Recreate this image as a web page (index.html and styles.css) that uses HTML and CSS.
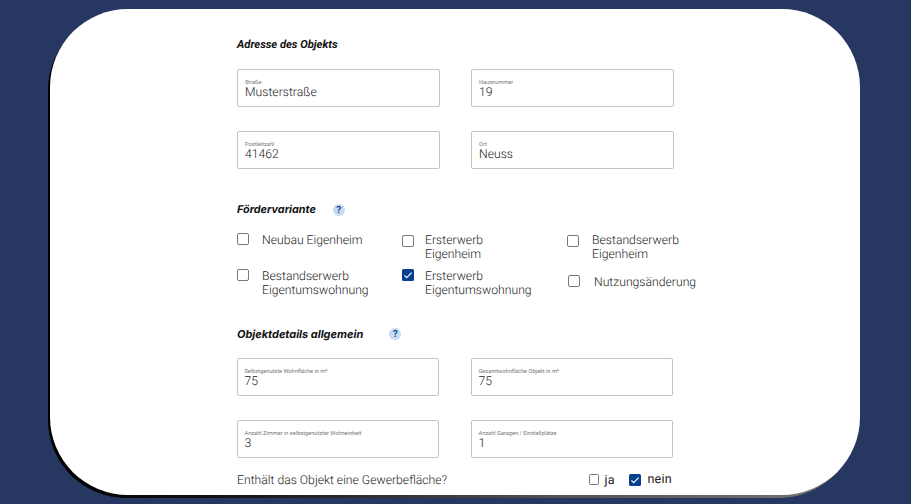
FILE: index.html
```html
<!DOCTYPE html>
<html lang="de">
<head>
<meta charset="utf-8">
<title>Objektdaten</title>
<link rel="stylesheet" href="styles.css">
</head>
<body>
<main class="card">
  <form class="form">
    <h2 class="title title-address">Adresse des Objekts</h2>
    <section class="fields fields-address">
      <div class="field"><label>Straße</label><span class="value">Musterstraße</span></div>
      <div class="field"><label>Hausnummer</label><span class="value">19</span></div>
      <div class="field"><label>Postleitzahl</label><span class="value">41462</span></div>
      <div class="field"><label>Ort</label><span class="value">Neuss</span></div>
    </section>

    <div class="heading heading-variant">
      <h2 class="title title-variant">Fördervariante</h2>
      <span class="help">?</span>
    </div>
    <section class="options">
      <div class="option"><i class="box"></i><span>Neubau Eigenheim</span></div>
      <div class="option middle lower"><i class="box"></i><span>Ersterwerb<br>Eigenheim</span></div>
      <div class="option last lower"><i class="box"></i><span>Bestandserwerb<br>Eigenheim</span></div>
      <div class="option"><i class="box"></i><span>Bestandserwerb<br>Eigentumswohnung</span></div>
      <div class="option middle"><i class="box checked"><svg viewBox="0 0 12 12"><path d="M2.4 6.3 4.7 8.6 9.6 3.6"/></svg></i><span>Ersterwerb<br>Eigentumswohnung</span></div>
      <div class="option last change"><i class="box"></i><span>Nutzungsänderung</span></div>
    </section>

    <div class="heading heading-details">
      <h2 class="title title-details">Objektdetails allgemein</h2>
      <span class="help">?</span>
    </div>
    <section class="fields fields-details">
      <div class="field"><label>Selbstgenutzte Wohnfläche in m²</label><span class="value">75</span></div>
      <div class="field"><label>Gesamtwohnfläche Objekt in m²</label><span class="value">75</span></div>
      <div class="field"><label>Anzahl Zimmer in selbstgenutzter Wohneinheit</label><span class="value">3</span></div>
      <div class="field"><label>Anzahl Garagen / Einstellplätze</label><span class="value">1</span></div>
    </section>

    <div class="question">
      <span class="question-text">Enthält das Objekt eine Gewerbefläche?</span>
      <i class="box small"></i><span class="answer yes">ja</span>
      <i class="box checked"><svg viewBox="0 0 12 12"><path d="M2.4 6.3 4.7 8.6 9.6 3.6"/></svg></i><span class="answer no">nein</span>
    </div>
  </form>
</main>
</body>
</html>
```
FILE: styles.css
```css
* { box-sizing: border-box; }

body {
  margin: 0;
  width: 911px;
  height: 504px;
  overflow: hidden;
  background: #263761;
  font-family: Roboto, "Liberation Sans", sans-serif;
  font-weight: 300;
  color: #222;
  text-rendering: geometricPrecision;
}

.card {
  position: relative;
  z-index: 0;
  width: 810px;
  height: 486px;
  margin: 9px 0 0 50px;
  border-radius: 78px;
}

/* offset shadow that fades from black to grey */
.card::before {
  content: "";
  position: absolute;
  z-index: -2;
  inset: 3px 3px -2.5px -2.5px;
  border-radius: 78px;
  background: linear-gradient(90deg, #000 0, #111 20%, #555 65%, #777 100%);
}

.card::after {
  content: "";
  position: absolute;
  z-index: -1;
  inset: 0;
  border-radius: 78px;
  background: #fff;
}

.form { padding: 28px 0 0 187px; width: 680px; }

.title {
  margin: 0;
  line-height: 16px;
  font-weight: 700;
  font-style: italic;
  color: #111;
  white-space: nowrap;
}
.title-address { font-size: 11.2px; }
.title-variant { font-family: Inter, Roboto, sans-serif; font-size: 10.8px; }
.title-details { font-family: Inter, Roboto, sans-serif; font-size: 10.95px; }

.fields {
  display: grid;
  grid-template-columns: 202.5px 202.5px;
  grid-auto-rows: 38px;
  gap: 24px 31.5px;
}
.fields-address { margin-top: 16px; }
.fields-details { margin: 16px 0 0 -0.5px; }

.field {
  display: flex;
  flex-direction: column;
  padding: 10px 0 0 7px;
  border: 1px solid #c4c4c4;
  border-radius: 2px;
}
.field label {
  font-size: 5.65px;
  line-height: 6px;
  font-weight: 400;
  color: #777;
  white-space: nowrap;
}
.value { font-size: 12.2px; line-height: 13px; }

.heading { display: flex; align-items: center; }
.heading-variant { margin-top: 33px; gap: 17px; }
.heading-details { margin-top: 29px; gap: 26px; }

.help {
  width: 12px;
  height: 12px;
  border-radius: 50%;
  background: #c7dcf0;
  color: #17479b;
  font-size: 10px;
  line-height: 13px;
  font-weight: 700;
  text-align: center;
}

.options {
  display: grid;
  grid-template-columns: 165px 165px 150px;
  grid-template-rows: 35.5px 28px;
  margin-top: 15px;
  font-size: 12.2px;
  line-height: 14px;
  white-space: nowrap;
}
.option { display: flex; align-items: flex-start; gap: 13px; }
.option.middle { gap: 11px; }
.option.lower .box { margin-top: 2px; }
.change { padding: 6px 0 0 1px; }
.option.change { gap: 14px; }

.box {
  flex: none;
  width: 12px;
  height: 12px;
  border: 1px solid #777;
  border-radius: 2px;
}
.box.checked { border: 0; background: #07408f; border-radius: 1.5px; }
.box svg { display: block; fill: none; stroke: #fff; stroke-width: 1.1; }
.box.small { width: 9.5px; height: 11px; border-radius: 1.5px; }

.question {
  display: flex;
  align-items: center;
  height: 16px;
  margin-top: 14px;
  font-size: 12.2px;
  line-height: 16px;
  white-space: nowrap;
}
.question-text { width: 352px; }
.answer { font-size: 12.6px; font-weight: 400; letter-spacing: .15px; }
.yes { width: 24px; margin-left: 6px; padding-top: 2px; }
.no { margin-left: 7px; padding-top: 1px; }
```
